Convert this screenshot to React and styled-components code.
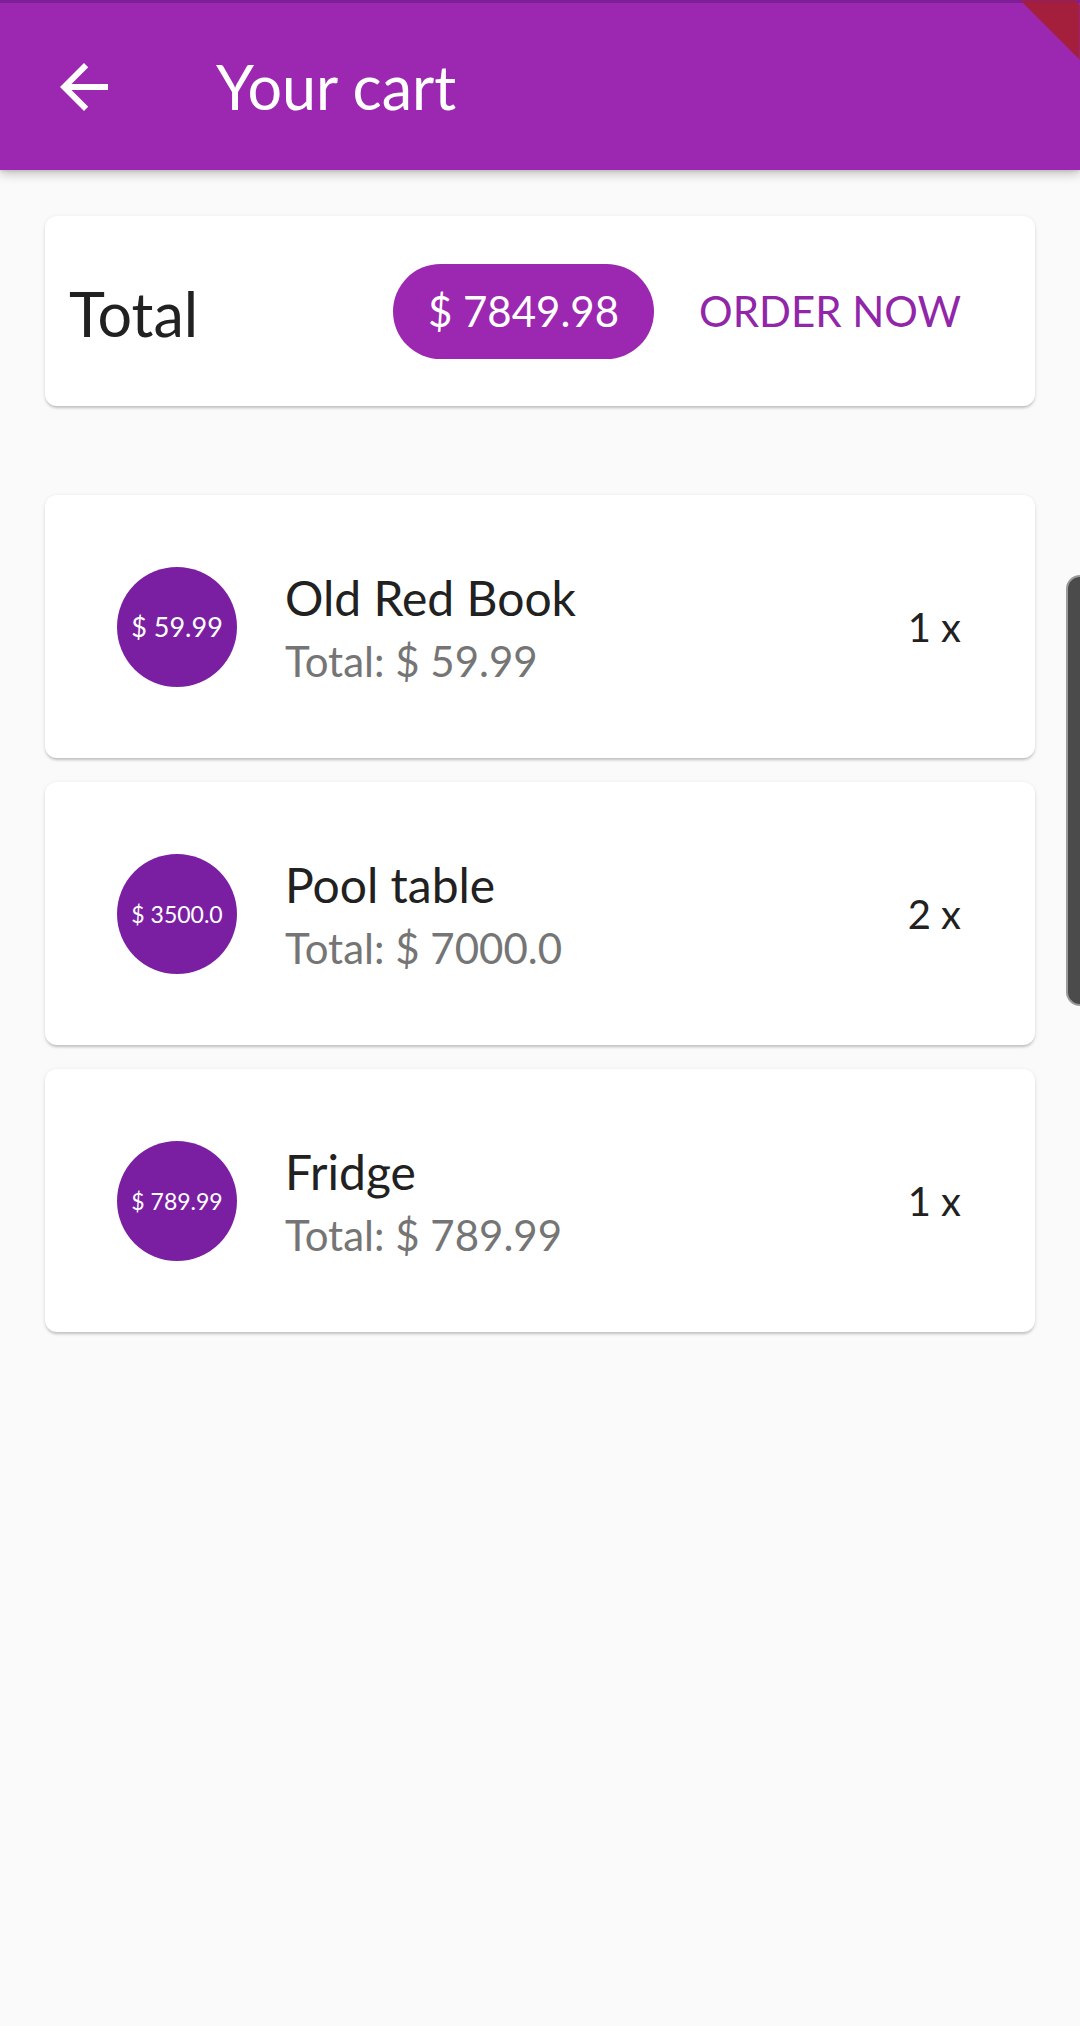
import styled, { createGlobalStyle } from 'styled-components';

const GlobalStyle = createGlobalStyle`
  html, body {
    margin: 0;
    padding: 0;
    background: #fafafa;
  }
  body {
    font-family: Lato, "Open Sans", sans-serif;
    color: #212121;
  }
`;

const Screen = styled.div`
  position: relative;
  width: 1080px;
  min-height: 2026px;
  background: #fafafa;
  overflow: hidden;
`;

const AppBar = styled.header`
  position: relative;
  z-index: 2;
  display: flex;
  align-items: center;
  height: 167px;
  border-top: 3px solid #7f1f97;
  background: #9c27b0;
  box-shadow: 0 4px 10px rgba(0, 0, 0, 0.22), 0 1px 3px rgba(0, 0, 0, 0.12);
`;

const BackButton = styled.button`
  display: flex;
  align-items: center;
  justify-content: center;
  width: 72px;
  height: 72px;
  margin-left: 48px;
  padding: 0;
  border: none;
  background: transparent;
`;

const Title = styled.h1`
  margin: 0 0 0 96px;
  font-size: 61px;
  font-weight: 400;
  color: #fff;
  line-height: 1;
`;

const DebugCorner = styled.div`
  position: absolute;
  top: 0;
  right: 0;
  z-index: 3;
  width: 60px;
  height: 60px;
  background: #a31f3b;
  clip-path: polygon(0 0, 92% 0, 100% 8%, 100% 100%);
  filter: blur(1.5px);
`;

const ScrollTab = styled.div`
  position: absolute;
  top: 575px;
  right: 0;
  z-index: 3;
  width: 12px;
  height: 427px;
  background: #4b4b4b;
  border: 2px solid #9a9a9a;
  border-right: none;
  border-radius: 14px 0 0 14px;
`;

const Card = styled.div`
  display: flex;
  align-items: center;
  margin: 0 45px;
  background: #fff;
  border-radius: 12px;
  box-shadow: 0 3px 3px -1px rgba(0, 0, 0, 0.18), 0 1px 4px rgba(0, 0, 0, 0.1);
`;

const SummaryCard = styled(Card)`
  height: 190px;
  margin-top: 46px;
  padding: 0 24px;
`;

const SummaryLabel = styled.span`
  font-size: 61px;
  color: #212121;
  margin-top: 4px;
`;

const Chip = styled.span`
  display: flex;
  align-items: center;
  height: 95px;
  margin-left: auto;
  padding: 0 35px;
  border-radius: 48px;
  background: #9c27b0;
  color: #fff;
  font-size: 42px;
`;

const OrderButton = styled.button`
  padding: 0 50px 0 45px;
  border: none;
  background: transparent;
  color: #9127a8;
  font-family: Lato, sans-serif;
  font-size: 42px;
  text-transform: uppercase;
`;

const ItemList = styled.div`
  display: flex;
  flex-direction: column;
  gap: 24px;
  margin-top: 89px;
`;

const ItemCard = styled(Card)`
  height: 263px;
  padding: 0 74px 0 72px;
`;

const PriceBadge = styled.div`
  display: flex;
  align-items: center;
  justify-content: center;
  flex-shrink: 0;
  width: 120px;
  height: 120px;
  border-radius: 50%;
  background: #7b1fa2;
  color: #fff;
  font-size: ${(p) => p.$size}px;
  white-space: nowrap;
`;

const ItemText = styled.div`
  display: flex;
  flex-direction: column;
  margin-left: 48px;
  flex: 1;
`;

const ItemName = styled.span`
  font-size: 48px;
  line-height: 69px;
  color: #212121;
`;

const ItemTotal = styled.span`
  font-size: 42px;
  line-height: 58px;
  color: #757575;
`;

const Quantity = styled.span`
  font-size: 40px;
  color: #212121;
`;

const items = [
  { name: 'Old Red Book', price: '59.99', total: '59.99', qty: 1, size: 27 },
  { name: 'Pool table', price: '3500.0', total: '7000.0', qty: 2, size: 23 },
  { name: 'Fridge', price: '789.99', total: '789.99', qty: 1, size: 23 },
];

const ArrowBack = () => (
  <svg width="72" height="72" viewBox="0 0 24 24">
    <path fill="#fff" d="M20 11H7.83l5.59-5.59L12 4l-8 8 8 8 1.41-1.41L7.83 13H20v-2z" />
  </svg>
);

export default function App() {
  return (
    <Screen>
      <GlobalStyle />
      <AppBar>
        <BackButton aria-label="Back">
          <ArrowBack />
        </BackButton>
        <Title>Your cart</Title>
      </AppBar>
      <DebugCorner />
      <ScrollTab />

      <SummaryCard>
        <SummaryLabel>Total</SummaryLabel>
        <Chip>$ 7849.98</Chip>
        <OrderButton>Order now</OrderButton>
      </SummaryCard>

      <ItemList>
        {items.map((item) => (
          <ItemCard key={item.name}>
            <PriceBadge $size={item.size}>$ {item.price}</PriceBadge>
            <ItemText>
              <ItemName>{item.name}</ItemName>
              <ItemTotal>Total: $ {item.total}</ItemTotal>
            </ItemText>
            <Quantity>{item.qty} x</Quantity>
          </ItemCard>
        ))}
      </ItemList>
    </Screen>
  );
}
